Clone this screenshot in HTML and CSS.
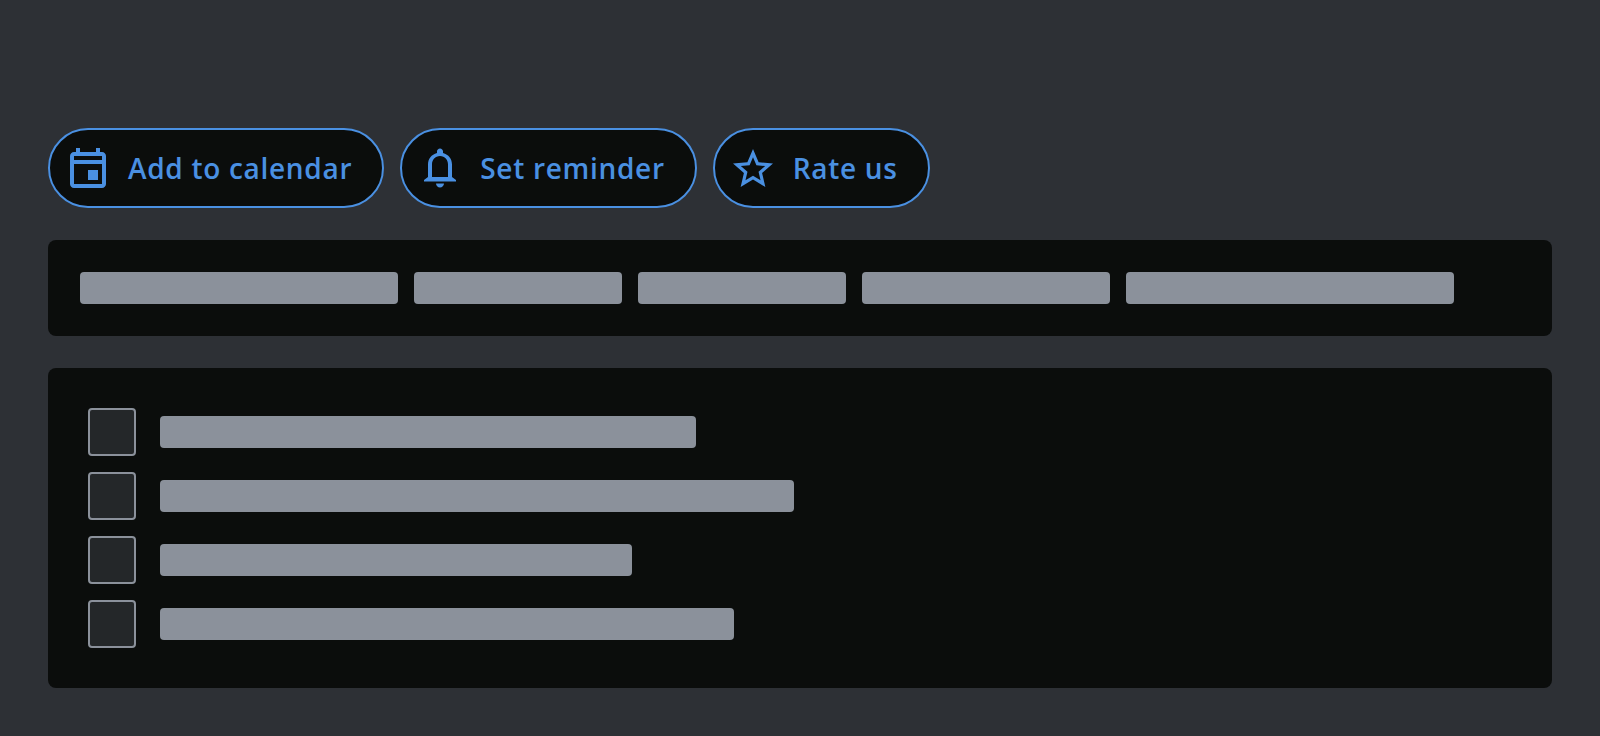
FILE: index.html
```html
<!DOCTYPE html>
<html lang="en">
<head>
<meta charset="utf-8">
<meta name="viewport" content="width=device-width, initial-scale=1">
<title>Assist chips</title>
<link rel="stylesheet" href="styles.css">
</head>
<body>
<main class="page">
  <div class="chips">
    <button class="chip" type="button">
      <svg class="chip-icon" viewBox="0 0 24 24" aria-hidden="true"><path d="M19 4h-1V2h-2v2H8V2H6v2H5c-1.11 0-1.99.9-1.99 2L3 20c0 1.1.89 2 2 2h14c1.1 0 2-.9 2-2V6c0-1.1-.9-2-2-2zm0 16H5V10h14v10zm0-12H5V6h14v2zM12 13h5v5h-5z"/></svg>
      <span>Add to calendar</span>
    </button>
    <button class="chip" type="button">
      <svg class="chip-icon" viewBox="0 0 24 24" aria-hidden="true"><path d="M12 21.8c1.1 0 2-.9 2-2h-4c0 1.1.9 2 2 2zM18 16.5V10.3c0-2.9-1.7-5-4.5-5.8V3.7c0-.83-.67-1.5-1.5-1.5s-1.5.67-1.5 1.5v.8C7.7 5.3 6 7.4 6 10.3v6.2l-2 1.5v.8h16V18l-2-1.5zM16 16.5H8v-6.2C8 7.8 9.6 6 12 6s4 1.8 4 4.3v6.2z"/></svg>
      <span>Set reminder</span>
    </button>
    <button class="chip" type="button">
      <svg class="chip-icon" viewBox="0 0 24 24" aria-hidden="true"><path d="M22 9.74l-7.19-.62L12 2.5 9.19 9.13 2 9.74l5.46 4.73L5.82 21.5 12 17.77 18.18 21.5l-1.63-7.03L22 9.74zM12 15.9l-3.76 2.27 1-4.28-3.32-2.88 4.38-.38L12 6.6l1.71 4.04 4.38.38-3.32 2.88 1 4.28L12 15.9z"/></svg>
      <span>Rate us</span>
    </button>
  </div>
  <section class="panel tabs">
    <span class="bar w-318"></span>
    <span class="bar w-208"></span>
    <span class="bar w-208"></span>
    <span class="bar w-248"></span>
    <span class="bar w-328"></span>
  </section>
  <section class="panel list">
    <label class="item"><input class="check" type="checkbox" aria-label="Item 1"><span class="bar w-536"></span></label>
    <label class="item"><input class="check" type="checkbox" aria-label="Item 2"><span class="bar w-634"></span></label>
    <label class="item"><input class="check" type="checkbox" aria-label="Item 3"><span class="bar w-472"></span></label>
    <label class="item"><input class="check" type="checkbox" aria-label="Item 4"><span class="bar w-574"></span></label>
  </section>
</main>
</body>
</html>
```
FILE: styles.css
```css
* { box-sizing: border-box; }

body {
  margin: 0;
  background: #2d3035;
  font-family: "Open Sans", sans-serif;
}

.page {
  display: flex;
  flex-direction: column;
  gap: 32px;
  padding: 128px 48px 48px;
}

.chips {
  display: flex;
  flex-wrap: wrap;
  gap: 16px;
}

.chip {
  display: flex;
  align-items: center;
  gap: 16px;
  height: 80px;
  padding: 0 30px 0 14px;
  border: 2px solid #4a90e2;
  border-radius: 40px;
  background: #0b0d0c;
  color: #4a90e2;
  font: 600 28px/38px "Open Sans", sans-serif;
  letter-spacing: 0.025em;
}

.chip-icon {
  width: 48px;
  height: 48px;
  fill: currentColor;
}

.panel {
  border-radius: 8px;
  background: #0b0d0c;
}

.tabs {
  display: flex;
  flex-wrap: wrap;
  gap: 16px;
  padding: 32px;
}

.list {
  display: flex;
  flex-direction: column;
  gap: 16px;
  padding: 40px;
}

.item {
  display: flex;
  align-items: center;
  gap: 24px;
}

.check {
  appearance: none;
  flex: none;
  width: 48px;
  height: 48px;
  margin: 0;
  border: 2px solid #8b919b;
  border-radius: 4px;
  background: #242729;
}

.bar {
  height: 32px;
  border-radius: 4px;
  background: #8b919b;
}

.w-208 { width: 208px; }
.w-248 { width: 248px; }
.w-318 { width: 318px; }
.w-328 { width: 328px; }
.w-472 { width: 472px; }
.w-536 { width: 536px; }
.w-574 { width: 574px; }
.w-634 { width: 634px; }
```
